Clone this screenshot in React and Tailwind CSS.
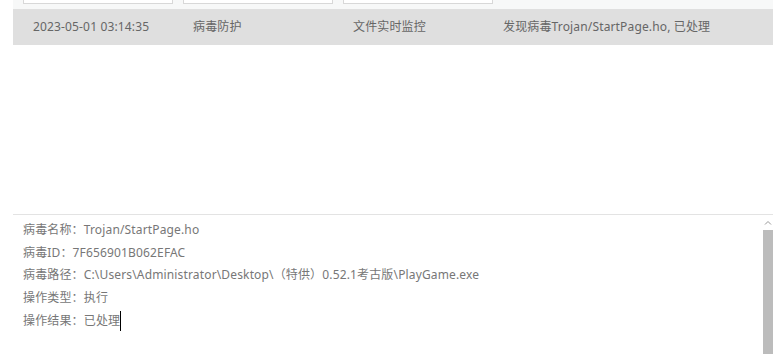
const row = {
  time: '2023-05-01 03:14:35',
  module: '病毒防护',
  source: '文件实时监控',
  detail: '发现病毒Trojan/StartPage.ho, 已处理',
}

const details = [
  ['病毒名称', 'Trojan/StartPage.ho'],
  ['病毒ID', '7F656901B062EFAC'],
  ['病毒路径', 'C:\\Users\\Administrator\\Desktop\\（特供）0.52.1考古版\\PlayGame.exe'],
  ['操作类型', '执行'],
  ['操作结果', '已处理'],
]

export default function App() {
  return (
    <div
      className="w-[783px] h-[354px] bg-white overflow-hidden text-[12px] tracking-[0.15px]"
      style={{ fontFamily: '"Noto Sans", "Noto Sans CJK SC", sans-serif' }}
    >
      {/* list area */}
      <div className="ml-[13px] w-[760px]">
        <div className="h-[9px] bg-[#f7f8f8] flex gap-[10px] pl-[10px]">
          <div className="w-[150px] h-[4px] border border-t-0 border-[#d8d8d8] bg-white" />
          <div className="w-[150px] h-[4px] border border-t-0 border-[#d8d8d8] bg-white" />
          <div className="w-[150px] h-[4px] border border-t-0 border-[#d8d8d8] bg-white" />
        </div>
        <div className="h-[36px] bg-[#dfdfdf] flex items-center text-[#666]">
          <span className="w-[180px] pl-[20px]">{row.time}</span>
          <span className="w-[160px]">{row.module}</span>
          <span className="w-[150px]">{row.source}</span>
          <span>{row.detail}</span>
        </div>
      </div>

      <div className="h-[169px]" />

      {/* detail panel */}
      <div className="ml-[13px] w-[760px] border-t border-[#e3e3e3] flex h-[140px]">
        <div className="flex-1 pl-[10px] pt-[4px] text-[#777] leading-[22.7px]">
          {details.map(([k, v], i) => (
            <div key={k} className="flex items-center">
              <span>{k}：{v}</span>
              {i === details.length - 1 && <span className="inline-block w-px h-[20px] bg-black" />}
            </div>
          ))}
        </div>
        <div className="w-[10px] flex flex-col items-center">
          <svg width="8" height="6" viewBox="0 0 8 6" className="mt-[5px] mb-[4px]">
            <path d="M1 4.5 L4 1.5 L7 4.5" fill="none" stroke="#999" strokeWidth="1" />
          </svg>
          <div className="w-[10px] flex-1 bg-[#bcbcbc]" />
        </div>
      </div>
    </div>
  )
}
